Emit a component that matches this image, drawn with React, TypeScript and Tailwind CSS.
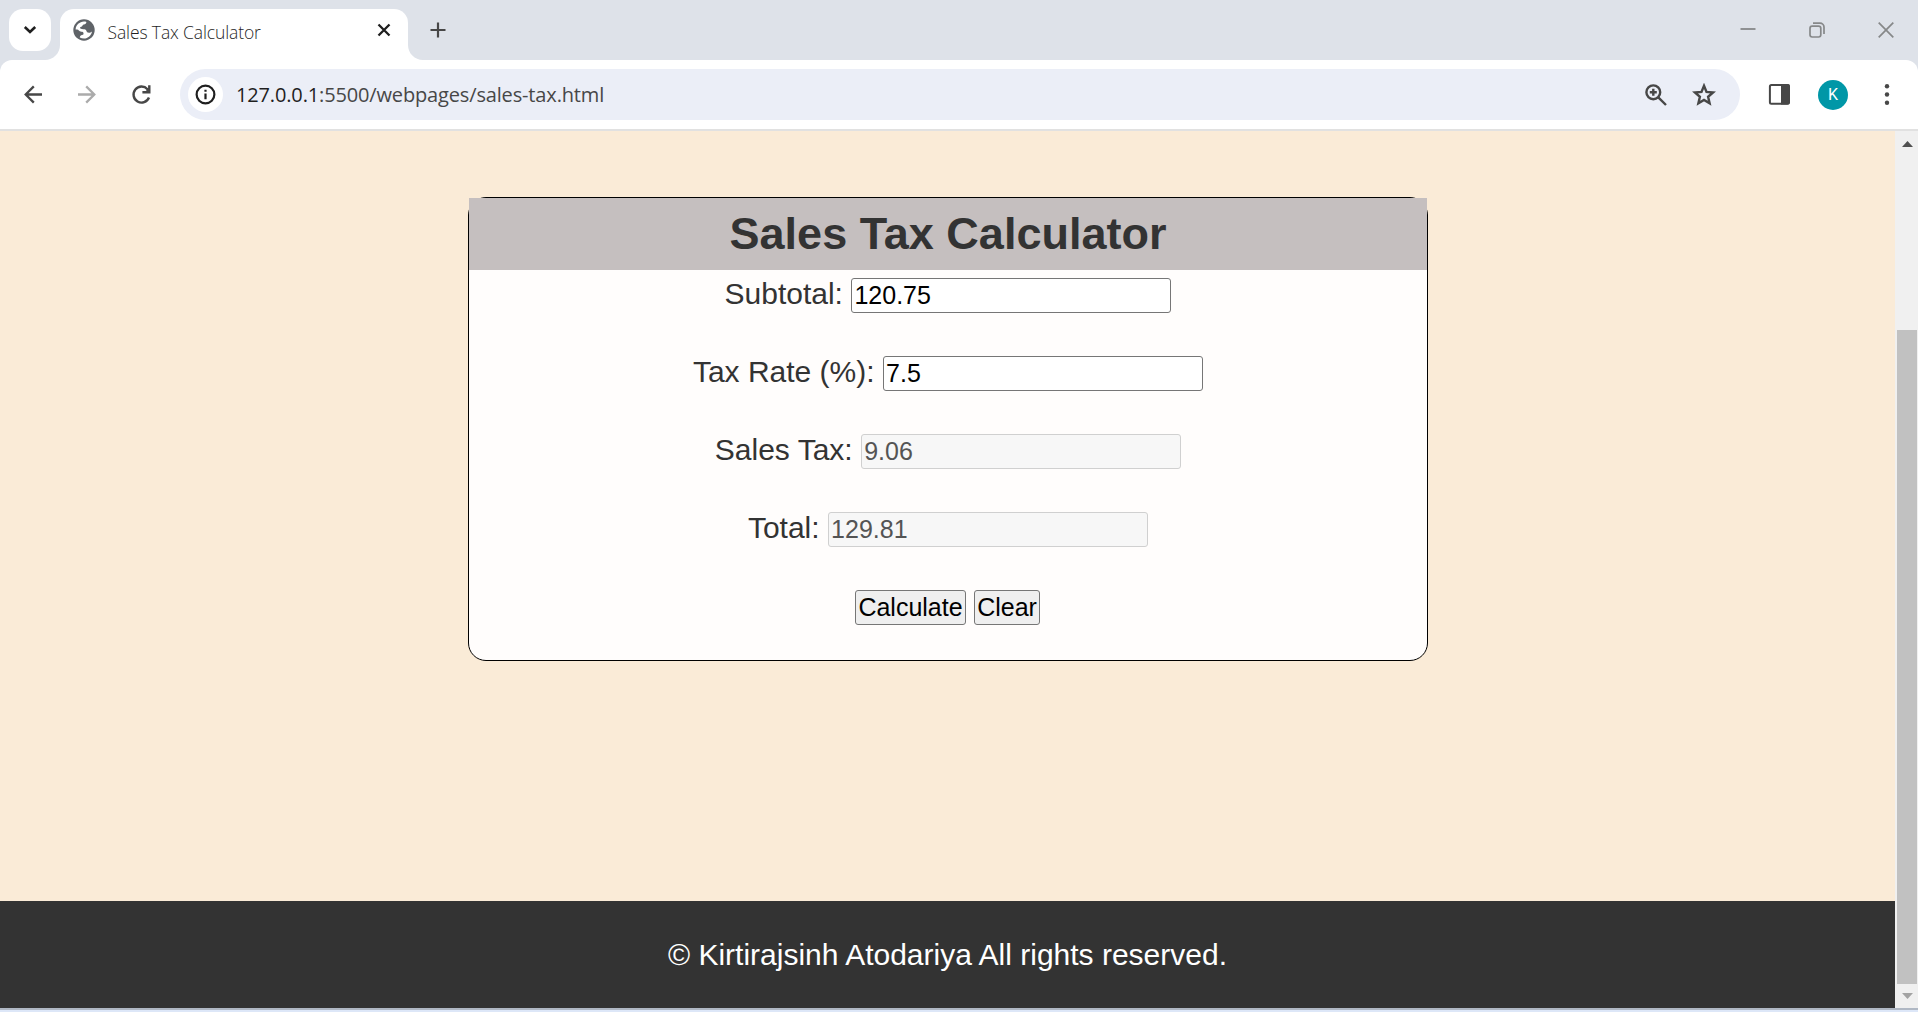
import React from "react";

function TabStrip() {
  return (
    <div className="flex h-[60px] shrink-0 items-start bg-[#dee2e9] pt-[9px]">
      <button className="ml-[9px] flex size-[42px] items-center justify-center rounded-[14px] bg-white">
        <svg width="14" height="10" viewBox="0 0 14 10" fill="none" stroke="#1f1f1f" strokeWidth="2.6">
          <path d="M1.8 2 7 7l5.2-5" />
        </svg>
      </button>
      <div className="relative ml-[9px] flex h-[51px] w-[348px] items-start rounded-t-[14px] bg-white">
        <svg className="absolute -left-[15px] bottom-0" width="15" height="15" viewBox="0 0 15 15" fill="#fff">
          <path d="M15 0v15H0C8.3 15 15 8.3 15 0z" />
        </svg>
        <svg className="absolute -right-[15px] bottom-0" width="15" height="15" viewBox="0 0 15 15" fill="#fff">
          <path d="M0 0v15h15C6.7 15 0 8.3 0 0z" />
        </svg>
        <svg className="ml-[13px] mt-[10px] shrink-0" width="22" height="22" viewBox="0 0 22 22">
          <circle cx="11" cy="11" r="10.7" fill="#5f6368" />
          <path
            d="M2.600 10.500C2.900 6 6.500 2.600 11 2.500c.9 0 1.700.1 2.400.4-.2 1.700-1 2.400-2.600 2.500-1.300.1-1.100 2.100-2.500 2.300-1.500.2-1.600 1.500-.5 2.100 1.200.6 3.600.2 4.900 1 1 .7.700 2.300 2 2.700 1.200.4 3.200 0 4.300-1.100-.7 4-4 7-8 7.100-1.500 0-3-.4-4.200-1.100.2-1.500.9-2.300 2.300-2.400 1.300-.1 1.500-.8 1.400-1.800-.1-1.200-.9-1.400-2.200-1.400C6 12.700 5.500 10.700 4.200 10.600z"
            fill="#fff"
          />
        </svg>
        <span className="ml-[12.5px] mt-[11px] whitespace-nowrap font-['Open_Sans',sans-serif] text-[17.5px] font-[350] leading-[24px] tracking-[-0.12px] text-[#1f1f1f]">
          Sales Tax Calculator
        </span>
        <svg className="absolute left-[317px] top-[14px]" width="14" height="14" viewBox="0 0 14 14" stroke="#1f1f1f" strokeWidth="2.3">
          <path d="M1.5 1.5l11 11M12.5 1.5l-11 11" />
        </svg>
      </div>
      <svg className="ml-[22px] mt-[13px]" width="16" height="16" viewBox="0 0 16 16" stroke="#474747" strokeWidth="2.2">
        <path d="M8 .5v15M.5 8h15" />
      </svg>
      <div className="ml-auto mr-[24px] mt-[13px] flex gap-[53px]">
        <svg width="16" height="16" viewBox="0 0 16 16" stroke="#868889" strokeWidth="1.8">
          <path d="M.5 7h15" />
        </svg>
        <svg width="16" height="16" viewBox="0 0 16 16" fill="none" stroke="#868889" strokeWidth="1.7">
          <rect x="1" y="4.2" width="10.8" height="10.8" rx="2.2" />
          <path d="M4 1.100h7a4 4 0 0 1 4 4V12" />
        </svg>
        <svg width="16" height="16" viewBox="0 0 16 16" stroke="#868889" strokeWidth="1.7">
          <path d="M.7.7l14.6 14.6M15.3.7.7 15.3" />
        </svg>
      </div>
    </div>
  );
}

function Toolbar() {
  return (
    <div className="h-[71px] shrink-0 bg-[#dee2e9]">
      <div className="flex h-full items-start rounded-t-[12px] border-b-2 border-[#e1e1e1] bg-white">
        <svg className="ml-[24px] mt-[25px]" width="19" height="19" viewBox="0 0 19 19" fill="none" stroke="#474747" strokeWidth="2.3">
          <path d="M18 9.500H2.500M9.800 1.400 1.700 9.500l8.100 8.100" />
        </svg>
        <svg className="ml-[34px] mt-[25px]" width="19" height="19" viewBox="0 0 19 19" fill="none" stroke="#ababab" strokeWidth="2.3">
          <path d="M1 9.500h15.500M9.200 1.400l8.100 8.100-8.100 8.100" />
        </svg>
        <svg className="ml-[35px] mt-[24px]" width="21" height="21" viewBox="0 0 21 21" fill="none" stroke="#474747" strokeWidth="2.4">
          <path d="M18 13.500A8 8 0 1 1 16.500 5.200l1.800 2" />
          <path d="M18.300 1.300v6.900h-6.900" />
          <path d="M18.300 3.500v4.700h-4.700z" fill="#474747" stroke="none" />
        </svg>
        <div className="ml-[28px] mt-[9px] flex h-[51px] w-[1560px] items-center rounded-full bg-[#ebeef7]">
          <span className="ml-[8px] flex size-[35px] items-center justify-center rounded-full bg-white">
            <svg width="21" height="21" viewBox="0 0 22 22" fill="none" stroke="#1f1f1f" strokeWidth="2.3">
              <circle cx="11" cy="11" r="9.3" />
              <path d="M11 10v6M11 6v2.200" />
            </svg>
          </span>
          <span className="ml-[13px] whitespace-nowrap font-['Open_Sans',sans-serif] text-[20px] tracking-[-0.15px] text-[#474747]">
            <span className="text-[#1f1f1f]">127.0.0.1</span>:5500/webpages/sales-tax.html
          </span>
          <svg className="ml-auto" width="22" height="22" viewBox="0 0 22 22" fill="none" stroke="#474747" strokeWidth="2.4">
            <circle cx="8.3" cy="8.3" r="6.9" />
            <path d="M13.300 13.300l7.700 7.700M8.300 4.800v7M4.800 8.300h7" />
          </svg>
          <svg className="ml-[25px] mr-[24px]" width="24" height="24" viewBox="0 0 24 24" fill="none" stroke="#474747" strokeWidth="2.4">
            <path d="M12 2.800l2.500 6.100 6.600.6-5 4.300 1.500 6.500-5.600-3.400-5.600 3.400 1.500-6.500-5-4.300 6.600-.6z" />
          </svg>
        </div>
        <svg className="ml-[28px] mt-[23px]" width="22" height="22" viewBox="0 0 22 22">
          <rect x="1.9" y="1.9" width="18.8" height="18.8" rx="1.5" fill="none" stroke="#474747" strokeWidth="2" />
          <path d="M13 1h7a2 2 0 0 1 2 2v16.500a2 2 0 0 1-2 2h-7z" fill="#474747" />
        </svg>
        <span className="ml-[28px] mt-[20px] flex size-[30px] items-center justify-center rounded-full bg-[#0097a7] font-[Roboto,sans-serif] text-[16px] leading-none text-white">
          K
        </span>
        <svg className="ml-[36px] mt-[23px]" width="6" height="23" viewBox="0 0 6 23" fill="#474747">
          <circle cx="3" cy="3.2" r="2.2" />
          <circle cx="3" cy="11.5" r="2.2" />
          <circle cx="3" cy="19.8" r="2.2" />
        </svg>
      </div>
    </div>
  );
}

function Field({ label, value, disabled = false }: { label: string; value: string; disabled?: boolean }) {
  return (
    <div className="flex h-[78px] items-baseline justify-center gap-[8.5px]">
      <label className="text-[30px] leading-[35px] text-[#333]">{label}</label>
      <input
        readOnly
        disabled={disabled}
        value={value}
        className="h-[35px] w-[320px] rounded-[3px] border border-[#767676] bg-white px-[2px] text-[25px] leading-[29px] text-black disabled:border-[#d0d0d0] disabled:bg-[#f7f7f7] disabled:text-[#545454]"
      />
    </div>
  );
}

function Calculator() {
  return (
    <section className="mt-[66px] h-[464px] w-[960px] rounded-[18px] border border-black bg-[#fffdfc]">
      <h1 className="mb-[6px] flex h-[72px] items-center justify-center bg-[#c5bfbf] pb-[2px] text-[45px] font-bold leading-none text-[#333]">
        Sales Tax Calculator
      </h1>
      <Field label="Subtotal:" value="120.75" />
      <Field label="Tax Rate (%):" value="7.5" />
      <Field label="Sales Tax:" value="9.06" disabled />
      <Field label="Total:" value="129.81" disabled />
      <div className="flex justify-center gap-[8px] pr-px text-[25px] text-black">
        <button className="mt-[2px] h-[35px] w-[111px] rounded-[3px] border border-[#767676] bg-[#efefef] leading-none">Calculate</button>
        <button className="mt-[2px] h-[35px] w-[66px] rounded-[3px] border border-[#767676] bg-[#efefef] leading-none">Clear</button>
      </div>
    </section>
  );
}

function ScrollBar() {
  return (
    <div className="flex w-[23px] shrink-0 flex-col items-center bg-[#f0f0f0] pl-px pt-[10px]">
      <svg width="11" height="6" viewBox="0 0 11 6" fill="#505050">
        <path d="M5.500 0 11 6H0z" />
      </svg>
      <div className="mt-[183px] h-[654px] w-[20px] bg-[#c1c1c1]" />
      <svg className="mt-[9px]" width="11" height="6" viewBox="0 0 11 6" fill="#a3a3a3">
        <path d="M0 0h11L5.500 6z" />
      </svg>
    </div>
  );
}

export default function App() {
  return (
    <div className="flex h-[1012px] w-[1918px] flex-col overflow-hidden font-['Liberation_Sans',Arial,sans-serif]">
      <TabStrip />
      <Toolbar />
      <div className="flex h-[877px] shrink-0">
        <div className="flex w-[1895px] flex-col">
          <main className="flex flex-1 flex-col items-center bg-[#faebd7] pl-px">
            <Calculator />
          </main>
          <footer className="flex h-[107px] items-center justify-center bg-[#333] text-[30px] leading-none text-white">
            © Kirtirajsinh Atodariya All rights reserved.
          </footer>
        </div>
        <ScrollBar />
      </div>
      <div className="h-[4px] border-t-2 border-[#b0b8c4] bg-[#dde7f8]" />
    </div>
  );
}
